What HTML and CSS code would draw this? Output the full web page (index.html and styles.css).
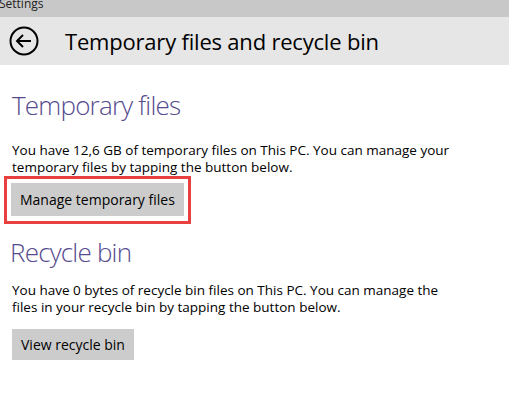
FILE: index.html
```html
<!DOCTYPE html>
<html lang="en">
<head>
    <meta charset="UTF-8">
    <meta name="viewport" content="width=device-width, initial-scale=1.0">
    <title>Settings</title>
    <link rel="stylesheet" href="styles.css">
</head>
<body>
    <div class="titlebar"><span class="appname">Settings</span></div>

    <div class="header">
        <svg class="back" width="30" height="30" viewBox="0 0 30 30">
            <circle cx="15" cy="15" r="13.5" fill="none" stroke="#000" stroke-width="2"/>
            <path d="M8 15 H22 M14 9 L8 15 L14 21" fill="none" stroke="#000" stroke-width="2"/>
        </svg>
        <h1 class="pageTitle">Temporary files and recycle bin</h1>
    </div>

    <div class="content">
        <h2 class="sectionTitle">Temporary files</h2>
        <p class="desc">You have 12,6 GB of temporary files on This PC. You can manage your temporary files by tapping the button below.</p>
        <div class="highlightBox">
            <button class="btn">Manage temporary files</button>
        </div>

        <h2 class="sectionTitle recycle">Recycle bin</h2>
        <p class="desc second">You have 0 bytes of recycle bin files on This PC. You can manage the files in your recycle bin by tapping the button below.</p>
        <button class="btn">View recycle bin</button>
    </div>
</body>
</html>
```

FILE: styles.css
```css
body {
    margin: 0;
    font-family: "Open Sans", "Noto Sans", sans-serif;
    background-color: #fff;
    color: #000;
    overflow: hidden;
}
.titlebar {
    height: 17px;
    background-color: #c8c8c8;
    overflow: hidden;
}
.appname {
    display: block;
    margin-top: -5px;
    margin-left: -1px;
    font-size: 12px;
    color: #222;
}
.header {
    height: 48px;
    background-color: #e6e6e6;
    display: flex;
    align-items: center;
    padding-left: 9px;
}
.back {
    flex-shrink: 0;
}
.pageTitle {
    margin: 0 0 0 26px;
    font-size: 22px;
    font-weight: 400;
    letter-spacing: -0.2px;
}
.content {
    padding-left: 12px;
}
.sectionTitle {
    margin: 0;
    padding-top: 22px;
    font-size: 26px;
    font-weight: 300;
    letter-spacing: -0.8px;
    color: #554b8e;
    line-height: 36px;
}
.recycle {
    margin-left: -2px;
    padding-top: 10px;
}
.desc {
    margin: 19px 0 0 0;
    width: 450px;
    font-size: 13.5px;
    line-height: 17px;
    color: #000;
}
.desc.second {
    margin-top: 12px;
}
.highlightBox {
    display: inline-block;
    margin: 0 0 0 -8px;
    padding: 4px 4px 5px 4px;
    border: 3px solid #e8403f;
}
.btn {
    display: block;
    padding: 0 9px;
    height: 33px;
    font-family: inherit;
    font-size: 14px;
    color: #000;
    background-color: #cccccc;
    border: none;
}
.content > .btn {
    margin-top: 13px;
    height: 31px;
}
```
